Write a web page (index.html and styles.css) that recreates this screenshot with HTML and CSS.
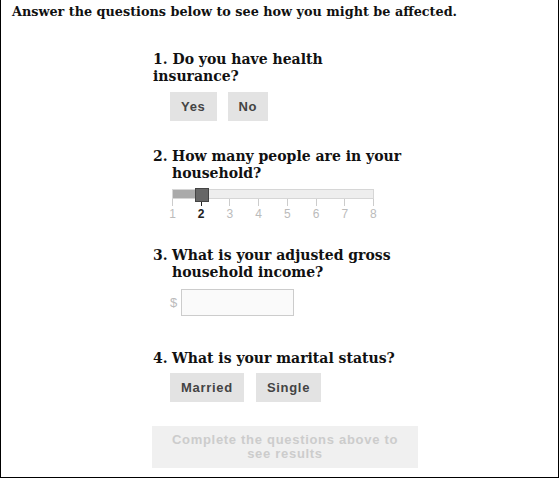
FILE: index.html
```html
<!DOCTYPE html>
<html lang="en">

<head>
    <meta charset="UTF-8">
    <meta name="viewport" content="width=device-width, initial-scale=1.0">
    <link rel="stylesheet" href="styles.css">
    <title>How might you be affected?</title>
</head>

<body>

    <div class="frame">
        <p class="intro">Answer the questions below to see how you might be affected.</p>

        <div class="quiz">

            <div class="question q-insurance">
                <h2 class="q-title">1. Do you have health<br>insurance?</h2>
                <div class="choices">
                    <button class="choice">Yes</button>
                    <button class="choice">No</button>
                </div>
            </div>

            <div class="question q-household">
                <h2 class="q-title hang"><span class="num">2.</span><span>How many people are in your<br>household?</span></h2>
                <div class="slider">
                    <div class="track">
                        <div class="fill" style="width: 23px"></div>
                        <div class="handle" style="left: 22px"></div>
                    </div>
                    <div class="stops">
                        <div class="stop"><i></i><span>1</span></div>
                        <div class="stop active"><i></i><span>2</span></div>
                        <div class="stop"><i></i><span>3</span></div>
                        <div class="stop"><i></i><span>4</span></div>
                        <div class="stop"><i></i><span>5</span></div>
                        <div class="stop"><i></i><span>6</span></div>
                        <div class="stop"><i></i><span>7</span></div>
                        <div class="stop"><i></i><span>8</span></div>
                    </div>
                </div>
            </div>

            <div class="question q-income">
                <h2 class="q-title hang"><span class="num">3.</span><span>What is your adjusted gross<br>household income?</span></h2>
                <div class="money">
                    <span class="currency">$</span>
                    <input class="money-input" type="text">
                </div>
            </div>

            <div class="question q-marital">
                <h2 class="q-title hang"><span class="num">4.</span><span>What is your marital status?</span></h2>
                <div class="choices">
                    <button class="choice">Married</button>
                    <button class="choice">Single</button>
                </div>
            </div>

            <button class="results" disabled>Complete the questions above to<br>see results</button>

        </div>
    </div>

</body>

</html>
```

FILE: styles.css
```css
body {
    margin: 0;
    padding: 0;
    background: #fff;
}

.frame {
    width: 557px;
    border: 1px solid #000;
    border-top: none;
    padding-bottom: 9px;
}

.intro {
    margin: 0;
    padding: 4px 0 0 11px;
    font-family: "DejaVu Serif", serif;
    font-weight: bold;
    font-size: 12.8px;
    line-height: 16px;
    color: #111;
}

.quiz {
    padding-left: 151px;
    width: 266px;
}

.question {
    margin-top: 27px;
}

.q-insurance {
    margin-top: 31px;
}

.q-income {
    margin-top: 26px;
}

.q-marital {
    margin-top: 34px;
}

.q-title {
    margin: 0;
    padding-left: 1px;
    font-family: "DejaVu Serif", serif;
    font-weight: bold;
    font-size: 14px;
    line-height: 17px;
    color: #111;
}

.q-title.hang {
    display: flex;
}

.q-title .num {
    width: 19px;
    flex: none;
}

.choices {
    display: flex;
    gap: 11px;
    margin: 7px 0 0 18px;
}

.q-marital .choices {
    margin-top: 6px;
    gap: 12px;
}

.choice {
    height: 29px;
    padding: 0 11px;
    border: none;
    background: #e3e3e3;
    color: #444;
    font-family: "Liberation Sans", Arial, sans-serif;
    font-weight: bold;
    font-size: 13px;
    letter-spacing: 0.7px;
    cursor: pointer;
}

/* household slider */
.slider {
    width: 202px;
    margin: 7px 0 0 20px;
}

.track {
    position: relative;
    height: 10px;
    box-sizing: border-box;
    border: 1px solid #d6d6d6;
    background: #eee;
}

.fill {
    height: 100%;
    background: #aaa;
}

.handle {
    position: absolute;
    top: -2px;
    width: 14px;
    height: 14px;
    box-sizing: border-box;
    border: 1px solid #444;
    background: #666;
}

.stops {
    display: flex;
    justify-content: space-between;
}

.stop {
    width: 1px;
    display: flex;
    flex-direction: column;
    align-items: center;
}

.stop i {
    width: 1px;
    height: 7px;
    background: #ccc;
}

.stop span {
    margin-top: 2px;
    font-family: "Liberation Sans", Arial, sans-serif;
    font-size: 12px;
    line-height: 13px;
    color: #bbb;
}

.stop.active i {
    background: #222;
}

.stop.active span {
    color: #222;
    font-weight: bold;
}

/* income field */
.money {
    display: flex;
    align-items: center;
    margin: 8px 0 0 18px;
}

.currency {
    width: 11px;
    font-family: "Liberation Sans", Arial, sans-serif;
    font-size: 13px;
    color: #bbb;
}

.money-input {
    width: 113px;
    height: 27px;
    box-sizing: border-box;
    margin: 0;
    border: 1px solid #ccc;
    background: #fafafa;
}

.results {
    display: block;
    width: 266px;
    height: 42px;
    margin-top: 24px;
    padding: 0;
    border: none;
    background: #f0f0f0;
    color: #ccc;
    font-family: "Liberation Sans", Arial, sans-serif;
    font-weight: bold;
    font-size: 13px;
    line-height: 14px;
    letter-spacing: 0.7px;
}
```
